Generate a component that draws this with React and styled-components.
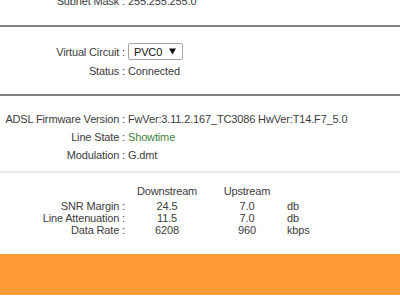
// Import: Dependencies
import React from "react";
import styled, { createGlobalStyle } from "styled-components";

// Data: ADSL line statistics
const lineStats = [
  { label: "SNR Margin", down: "24.5", up: "7.0", unit: "db" },
  { label: "Line Attenuation", down: "11.5", up: "7.0", unit: "db" },
  { label: "Data Rate", down: "6208", up: "960", unit: "kbps" },
];

// UI: App
function App() {
  return (
    <>
      <GlobalStyle />
      <Page>
        <Section $top="-8px" $bottom="15px">
          <InfoRow>
            <Label>Subnet Mask :</Label>
            <Value>255.255.255.0</Value>
          </InfoRow>
        </Section>

        <Divider />

        <Section $top="15px" $bottom="14px">
          <InfoRow $tall>
            <Label>Virtual Circuit :</Label>
            <Value>
              <Dropdown>
                <span>PVC0</span>
                <DropdownArrow width="7" height="7" viewBox="0 0 7 7">
                  <path d="M0 0.5H7L3.5 6.5Z" fill="#111" />
                </DropdownArrow>
              </Dropdown>
            </Value>
          </InfoRow>
          <InfoRow $tall>
            <Label>Status :</Label>
            <Value>Connected</Value>
          </InfoRow>
        </Section>

        <Divider />

        <Section $top="14px" $bottom="7px">
          <InfoRow>
            <Label>ADSL Firmware Version :</Label>
            <Value>FwVer:3.11.2.167_TC3086 HwVer:T14.F7_5.0</Value>
          </InfoRow>
          <InfoRow>
            <Label>Line State :</Label>
            <Value $status>Showtime</Value>
          </InfoRow>
          <InfoRow>
            <Label>Modulation :</Label>
            <Value>G.dmt</Value>
          </InfoRow>
        </Section>

        <Divider $light />

        <StatsTable>
          <StatsHead>
            <span />
            <Cell>Downstream</Cell>
            <Cell>Upstream</Cell>
            <span />
          </StatsHead>
          {lineStats.map((row) => (
            <StatsRow key={row.label}>
              <Label>{row.label} :</Label>
              <Cell>{row.down}</Cell>
              <Cell>{row.up}</Cell>
              <Unit>{row.unit}</Unit>
            </StatsRow>
          ))}
        </StatsTable>

        <Footer />
      </Page>
    </>
  );
}

// Export: App
export default App;

// Styled: GlobalStyle
const GlobalStyle = createGlobalStyle`
  html, body {
    background: #ffffff;
    margin: 0;
    overflow: hidden;
  }

  body {
    color: #3c3c3c;
    font-family: "Liberation Sans", Arial, sans-serif;
    font-size: 11px;
    letter-spacing: -0.15px;
  }
`;

// Styled: Page
const Page = styled.div`
  display: flex;
  flex-direction: column;
  height: 300px;
  overflow: hidden;
  width: 400px;
`;

// Styled: Section
const Section = styled.div`
  display: flex;
  flex-direction: column;
  margin-top: ${({ $top }) => ($top.startsWith("-") ? $top : "0")};
  padding-bottom: ${({ $bottom }) => $bottom};
  padding-top: ${({ $top }) => ($top.startsWith("-") ? "0" : $top)};
`;

// Styled: Divider
const Divider = styled.div`
  background: ${({ $light }) => ($light ? "#e8e8e8" : "#808080")};
  flex-shrink: 0;
  height: 2px;
  width: 100%;
`;

// Styled: InfoRow
const InfoRow = styled.div`
  align-items: center;
  display: grid;
  grid-template-columns: 125px 1fr;
  height: ${({ $tall }) => ($tall ? "19px" : "18px")};
  white-space: nowrap;
`;

// Styled: Label
const Label = styled.span`
  text-align: right;
  white-space: nowrap;
`;

// Styled: Value
const Value = styled.span`
  color: ${({ $status }) => ($status ? "#3b7f3b" : "inherit")};
  display: flex;
  padding-left: 3px;
`;

// Styled: Dropdown
const Dropdown = styled.span`
  align-items: center;
  background: #ffffff;
  border: 1px solid #a6a6a6;
  border-radius: 2px;
  box-sizing: border-box;
  color: #111111;
  display: inline-flex;
  height: 17px;
  padding: 0 6px 0 5px;
  width: 55px;
`;

// Styled: DropdownArrow
const DropdownArrow = styled.svg`
  flex-shrink: 0;
  margin-left: auto;
`;

// Styled: StatsTable
const StatsTable = styled.div`
  display: flex;
  flex-direction: column;
  padding-top: 12px;
`;

// Styled: StatsHead
const StatsHead = styled.div`
  display: grid;
  grid-template-columns: 125px 84px 76px 1fr;
  line-height: 12px;
  margin-bottom: 3px;
`;

// Styled: StatsRow
const StatsRow = styled.div`
  display: grid;
  grid-template-columns: 125px 84px 76px 1fr;
  line-height: 12px;
`;

// Styled: Cell
const Cell = styled.span`
  text-align: center;
`;

// Styled: Unit
const Unit = styled.span`
  padding-left: 2px;
`;

// Styled: Footer
const Footer = styled.div`
  background: #fe9a35;
  flex-shrink: 0;
  height: 41px;
  margin-top: 18px;
`;
